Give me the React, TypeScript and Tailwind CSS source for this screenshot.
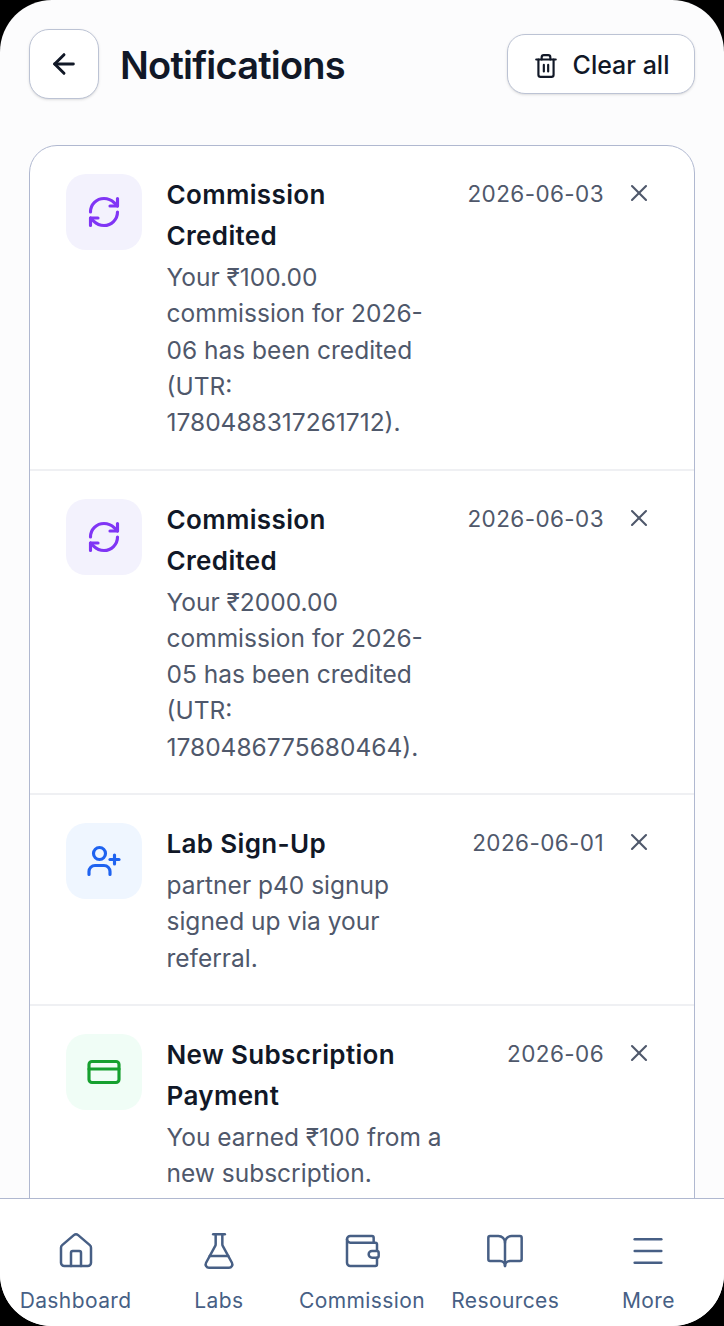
import { ArrowLeft, BookOpen, CreditCard, FlaskConical, Home, Menu, RefreshCw, Trash2, UserPlus, Wallet, X } from 'lucide-react'

const notifications = [
  {
    icon: RefreshCw,
    tile: 'bg-[#f3f2fd]',
    tint: 'text-[#8035f5]',
    title: 'Commission Credited',
    body: 'Your ₹100.00 commission for 2026-06 has been credited (UTR: 1780488317261712).',
    date: '2026-06-03',
  },
  {
    icon: RefreshCw,
    tile: 'bg-[#f3f2fd]',
    tint: 'text-[#8035f5]',
    title: 'Commission Credited',
    body: 'Your ₹2000.00 commission for 2026-05 has been credited (UTR: 1780486775680464).',
    date: '2026-06-03',
  },
  {
    icon: UserPlus,
    tile: 'bg-[#eff6ff]',
    tint: 'text-[#1f63f0]',
    title: 'Lab Sign-Up',
    body: 'partner p40 signup signed up via your referral.',
    date: '2026-06-01',
  },
  {
    icon: CreditCard,
    tile: 'bg-[#f0fdf6]',
    tint: 'text-[#16a02f]',
    title: 'New Subscription Payment',
    body: 'You earned ₹100 from a new subscription.',
    date: '2026-06',
  },
]

const navItems = [
  { icon: Home, label: 'Dashboard' },
  { icon: FlaskConical, label: 'Labs' },
  { icon: Wallet, label: 'Commission' },
  { icon: BookOpen, label: 'Resources' },
  { icon: Menu, label: 'More' },
]

export default function App() {
  return (
    <div className="h-[1326px] w-[724px] overflow-hidden bg-black font-['Inter',sans-serif]">
      <div className="flex h-full flex-col overflow-hidden rounded-[52px] bg-[#fcfcfd]">
        <div className="min-h-0 flex-1 overflow-hidden px-[29px] pt-[29px]">
          {/* Header */}
          <div className="flex items-center">
            <button className="flex h-[70px] w-[70px] items-center justify-center rounded-[20px] border border-[#bcc3d4] bg-white shadow-sm">
              <ArrowLeft size={32} className="text-[#111827]" strokeWidth={2.2} />
            </button>
            <h1 className="ml-[21px] pt-[2px] text-[38px] font-semibold tracking-[-0.8px] text-[#111827]">Notifications</h1>
            <button className="ml-auto flex h-[60px] w-[188px] items-center justify-center gap-[14px] rounded-[18px] border border-[#bcc3d4] bg-white pt-[3px] text-[25px] font-medium text-[#111827] shadow-sm">
              <Trash2 size={26} strokeWidth={2} />
              Clear all
            </button>
          </div>

          {/* List */}
          <div className="mt-[46px] rounded-t-[28px] border border-[#b0b8d0] bg-white">
            {notifications.map((n, i) => (
              <div key={i} className="flex border-b-2 border-[#eff0f3] pb-[28.25px] pl-[36px] pr-[41px] pt-[28px]">
                <div className={`flex h-[76px] w-[76px] shrink-0 items-center justify-center rounded-[20px] ${n.tile}`}>
                  <n.icon size={36} strokeWidth={2.1} className={n.tint} />
                </div>
                <div className="ml-[24.5px] w-[280px] shrink-0">
                  <div className="max-w-[265px] text-[26px] font-semibold leading-[41px] tracking-[0.35px] text-[#111827]">{n.title}</div>
                  <p className="mt-[3px] text-[24.5px] leading-[36.25px] text-[#4f586b]">{n.body}</p>
                </div>
                <div className="ml-auto mt-[3px] text-[22.5px] leading-[34px] tracking-[0.4px] text-[#4f586b]">{n.date}</div>
                <X size={28} strokeWidth={1.8} className="ml-[21px] mt-[5px] shrink-0 text-[#4f586b]" />
              </div>
            ))}
          </div>
        </div>

        {/* Bottom nav */}
        <nav className="grid h-[128px] shrink-0 grid-cols-5 border-t border-[#b0b8d0] bg-white px-[4px] pt-[32px]">
          {navItems.map((item) => (
            <div key={item.label} className="flex flex-col items-center text-[#475f85]">
              <item.icon size={40} strokeWidth={1.5} />
              <span className="mt-[15px] text-[21px] leading-[30px] tracking-[0.4px]">{item.label}</span>
            </div>
          ))}
        </nav>
      </div>
    </div>
  )
}
